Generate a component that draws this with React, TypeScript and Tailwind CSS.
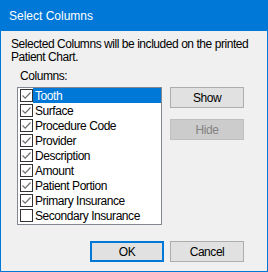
const columns = [
  { name: "Tooth", checked: true },
  { name: "Surface", checked: true },
  { name: "Procedure Code", checked: true },
  { name: "Provider", checked: true },
  { name: "Description", checked: true },
  { name: "Amount", checked: true },
  { name: "Patient Portion", checked: true },
  { name: "Primary Insurance", checked: true },
  { name: "Secondary Insurance", checked: false },
];

function CheckBox({ checked }: { checked: boolean }) {
  return (
    <span className="w-[13px] h-[13px] border border-[#333333] bg-white flex items-center justify-center shrink-0">
      {checked && (
        <svg width="11" height="11" viewBox="0 0 11 11">
          <path d="M1.5 5.5 L4.2 8.2 L9.5 2.5" fill="none" stroke="#6f6f6f" strokeWidth="1.2" />
        </svg>
      )}
    </span>
  );
}

export default function App() {
  return (
    <div
      className="w-[268px] h-[272px] border border-[#0078d7] bg-[#f0f0f0] flex flex-col text-[12px] tracking-[-0.45px] text-black"
      style={{ fontFamily: '"Liberation Sans", Arial, sans-serif' }}
    >
      {/* Title bar */}
      <div className="h-[30px] bg-[#0078d7] text-white flex items-center pl-[8px] shrink-0 tracking-normal">
        Select Columns
      </div>

      <div className="flex flex-col pl-[10px]">
        <p className="mt-[7px] leading-[13px] whitespace-nowrap">
          Selected Columns will be included on the printed
          <br />
          Patient Chart.
        </p>
        <div className="mt-[6px] pl-[9px] leading-[13px]">Columns:</div>

        <div className="flex mt-[4px] pl-[6px]">
          {/* Checked list */}
          <div className="w-[145px] h-[138px] border border-[#828790] bg-white flex flex-col">
            {columns.map((c, i) => (
              <div key={c.name} className="h-[15px] flex items-center pl-[2px]">
                <CheckBox checked={c.checked} />
                <span
                  className={
                    "h-[15px] flex items-center flex-1 pl-[2px] whitespace-nowrap " +
                    (i === 0 ? "bg-[#0078d7] text-white" : "")
                  }
                >
                  {c.name}
                </span>
              </div>
            ))}
          </div>

          {/* Side buttons */}
          <div className="flex flex-col ml-[8px] gap-[11px]">
            <button className="w-[74px] h-[21px] border border-[#adadad] bg-[#e1e1e1] flex items-center justify-center">
              Show
            </button>
            <button className="w-[74px] h-[21px] border border-[#bfbfbf] bg-[#cccccc] text-[#838383] flex items-center justify-center">
              Hide
            </button>
          </div>
        </div>

        {/* Bottom buttons */}
        <div className="flex mt-[16px] pl-[79px] gap-[6px]">
          <button className="w-[74px] h-[21px] border-2 border-[#0078d7] bg-[#e1e1e1] flex items-center justify-center">
            OK
          </button>
          <button className="w-[74px] h-[21px] border border-[#adadad] bg-[#e1e1e1] flex items-center justify-center">
            Cancel
          </button>
        </div>
      </div>
    </div>
  );
}
